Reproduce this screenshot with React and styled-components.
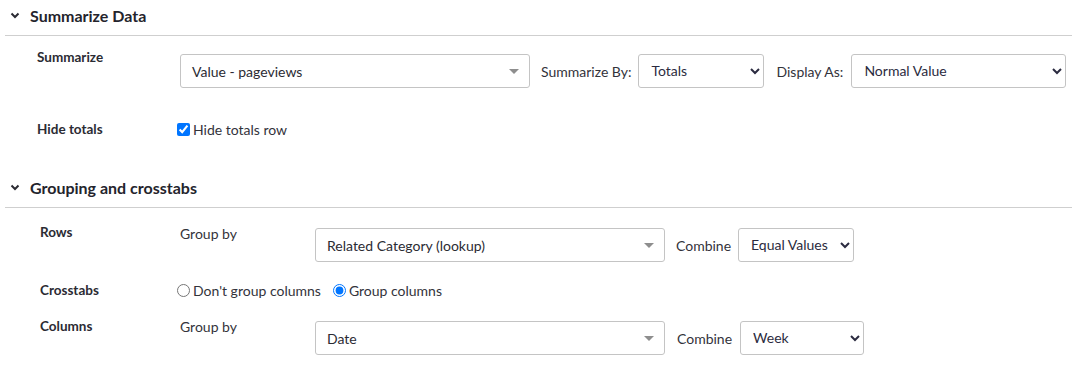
import styled, { createGlobalStyle } from "styled-components";

const GlobalStyle = createGlobalStyle`
  body {
    margin: 0;
    background: #fff;
    font-family: Lato, "Open Sans", sans-serif;
    color: #2b2b33;
  }
`;

const Page = styled.div`
  width: 1072px;
  padding-top: 3px;
`;

const Section = styled.section`
  margin-bottom: ${(p) => p.$gap || 0}px;
`;

const SectionHeader = styled.div`
  display: flex;
  align-items: center;
  gap: 9px;
  height: 24px;
  padding-left: 9px;
  font-size: 16px;
  font-weight: 700;
  color: #24242c;
`;

const Divider = styled.div`
  margin: 8px 0 0 5px;
  border-top: 1px solid #cfcfcf;
`;

const Body = styled.div`
  padding: ${(p) => p.$top}px 0 0 ${(p) => p.$left}px;
  display: flex;
  flex-direction: column;
  gap: ${(p) => p.$gap}px;
`;

const Row = styled.div`
  display: flex;
  align-items: flex-start;
`;

const Label = styled.div`
  width: ${(p) => p.$w}px;
  flex-shrink: 0;
  font-size: 13.5px;
  font-weight: 700;
  margin-top: ${(p) => p.$mt || 0}px;
  color: #2b2b33;
`;

const SubLabel = styled.div`
  width: 135px;
  flex-shrink: 0;
  font-size: 14px;
  margin-top: ${(p) => p.$mt || 0}px;
  color: #33333b;
`;

const Controls = styled.div`
  display: flex;
  align-items: center;
  margin-top: ${(p) => p.$mt || 0}px;
  gap: ${(p) => p.$gap || 0}px;
`;

const Combo = styled.div`
  box-sizing: border-box;
  width: 350px;
  height: 34px;
  border: 1px solid #c4c4c4;
  border-radius: 3px;
  display: flex;
  align-items: center;
  justify-content: space-between;
  padding: 0 8px 0 11px;
  font-size: 14px;
  color: #2b2b33;
`;

const Caret = styled.span`
  width: 0;
  height: 0;
  border-left: 5px solid transparent;
  border-right: 5px solid transparent;
  border-top: 5px solid #8e8e8e;
  margin-right: 2px;
`;

const InlineLabel = styled.span`
  font-size: 14px;
  color: #33333b;
  margin: 0 ${(p) => p.$mr || 7}px 0 ${(p) => p.$ml || 11}px;
`;

const Select = styled.select`
  box-sizing: border-box;
  width: ${(p) => p.$w}px;
  height: 34px;
  border: 1px solid #c4c4c4;
  border-radius: 3px;
  background: #fff;
  padding: 0 6px 0 8px;
  font-family: Lato, "Open Sans", sans-serif;
  font-size: 14px;
  color: #2b2b40;
  margin-top: -1px;
`;

const Check = styled.label`
  display: flex;
  align-items: center;
  gap: 3px;
  font-size: 14px;
  color: #33333b;

  input {
    margin: 0;
    width: 13px;
    height: 13px;
  }
`;

const Chevron = () => (
  <svg width="12" height="12" viewBox="0 0 12 12">
    <path d="M2.5 4.5 L6 8 L9.5 4.5" fill="none" stroke="#2b2b33" strokeWidth="2" />
  </svg>
);

export default function App() {
  return (
    <Page>
      <GlobalStyle />
      <Section $gap={37}>
        <SectionHeader>
          <Chevron />
          Summarize Data
        </SectionHeader>
        <Divider />
        <Body $top={18} $left={37} $gap={33}>
          <Row>
            <Label $w={143} $mt={-5}>Summarize</Label>
            <Controls>
              <Combo>
                Value - pageviews
                <Caret />
              </Combo>
              <InlineLabel>Summarize By:</InlineLabel>
              <Select $w={126} defaultValue="Totals">
                <option>Totals</option>
              </Select>
              <InlineLabel $ml={12} $mr={8}>Display As:</InlineLabel>
              <Select $w={215} defaultValue="Normal Value">
                <option>Normal Value</option>
              </Select>
            </Controls>
          </Row>
          <Row>
            <Label $w={140}>Hide totals</Label>
            <Check>
              <input type="checkbox" defaultChecked />
              Hide totals row
            </Check>
          </Row>
        </Body>
      </Section>
      <Section>
        <SectionHeader>
          <Chevron />
          Grouping and crosstabs
        </SectionHeader>
        <Divider />
        <Body $top={20} $left={40} $gap={20}>
          <Row>
            <Label $w={140} $mt={-4}>Rows</Label>
            <SubLabel $mt={-3}>Group by</SubLabel>
            <Controls>
              <Combo>
                Related Category (lookup)
                <Caret />
              </Combo>
              <InlineLabel>Combine</InlineLabel>
              <Select $w={116} defaultValue="Equal Values">
                <option>Equal Values</option>
              </Select>
            </Controls>
          </Row>
          <Row>
            <Label $w={137}>Crosstabs</Label>
            <Controls $gap={12}>
              <Check>
                <input type="radio" name="ct" />
                Don't group columns
              </Check>
              <Check>
                <input type="radio" name="ct" defaultChecked />
                Group columns
              </Check>
            </Controls>
          </Row>
          <Row>
            <Label $w={140} $mt={-1}>Columns</Label>
            <SubLabel $mt={-1}>Group by</SubLabel>
            <Controls $mt={2}>
              <Combo>
                Date
                <Caret />
              </Combo>
              <InlineLabel $ml={12} $mr={8}>Combine</InlineLabel>
              <Select $w={124} defaultValue="Week">
                <option>Week</option>
              </Select>
            </Controls>
          </Row>
        </Body>
      </Section>
    </Page>
  );
}
